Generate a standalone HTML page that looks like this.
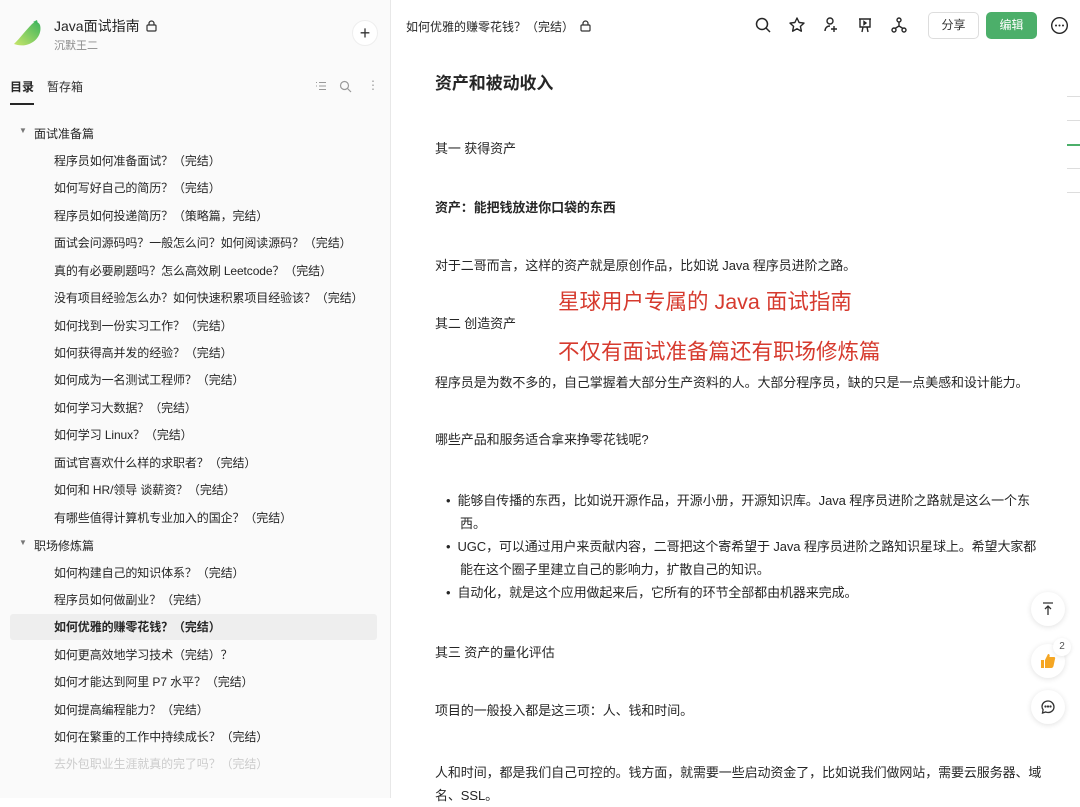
<!DOCTYPE html><html><head><meta charset="utf-8"><style>
*{margin:0;padding:0;box-sizing:border-box}
body{width:1080px;height:798px;overflow:hidden;background:#fff;font-family:"Liberation Sans","Noto Sans CJK SC",sans-serif;color:#262626;position:relative}
.sb{position:absolute;left:0;top:0;width:391px;height:798px;background:#fafafa;border-right:1px solid #e8e8e8}
.a{position:absolute;white-space:nowrap}
.it{position:absolute;left:54px;font-size:12px;color:#262626;line-height:16px;letter-spacing:-0.1px}
.c{position:absolute;left:435px;font-size:13px;color:#262626;line-height:18px;white-space:nowrap;letter-spacing:-0.1px}
.ic{position:absolute;top:16px}
.fb{position:absolute;left:1031px;width:34px;height:34px;border-radius:50%;background:#fff;box-shadow:0 1px 6px rgba(0,0,0,.12)}
.lk{display:inline-block;vertical-align:-1px;margin-left:6px}
</style></head><body>
<div class="sb">
<svg class="a" style="left:12px;top:18px" width="30" height="30" viewBox="0 0 30 30"><defs><linearGradient id="g" x1="0" y1="1" x2="1" y2="0"><stop offset="0" stop-color="#c9e66a"/><stop offset="1" stop-color="#3fb55c"/></linearGradient></defs><path d="M2 26 C8 20 14 12 20 6 C23 3 27 4 28 7 C30 14 26 24 14 27 C9 28 5 27 2 26Z" fill="url(#g)"/><path d="M21 4 L25 2 L26 6Z" fill="#3fb55c"/></svg>
<div class="a" style="left:54px;top:16px;font-size:14px;color:#262626">Java面试指南<svg class="lk" width="11" height="12" viewBox="0 0 11 12" fill="none" stroke="#333" stroke-width="1.2"><rect x="1" y="5" width="9" height="6" rx="1"/><path d="M3 5V3.5a2.5 2.5 0 015 0V5"/></svg></div>
<div class="a" style="left:54px;top:37px;font-size:11px;color:#8c8c8c">沉默王二</div>
<div class="a" style="left:352px;top:20px;width:26px;height:26px;border-radius:50%;background:#fff;border:1px solid #eee;text-align:center;line-height:24px;font-size:18px;color:#333">+</div>
<div class="a" style="left:10px;top:78px;font-size:12px;font-weight:bold">目录</div>
<div class="a" style="left:10px;top:103px;width:24px;height:2px;background:#262626"></div>
<div class="a" style="left:47px;top:78px;font-size:12px;color:#333">暂存箱</div>
<svg class="a" style="left:315px;top:81px" width="12" height="10" viewBox="0 0 12 10" stroke="#999" stroke-width="1.1"><path d="M1 1.5h1M4 1.5h7M1 5h1M4 5h7M4 8.5h7"/></svg>
<svg class="a" style="left:339px;top:80px" width="13" height="13" viewBox="0 0 13 13"><circle cx="5.5" cy="5.5" r="4" fill="none" stroke="#999" stroke-width="1.2"/><path d="M8.5 8.5L12 12" stroke="#999" stroke-width="1.2"/></svg>
<div class="a" style="left:367px;top:78px;font-size:12px;color:#999">⋮</div>
<div class="a" style="left:10px;top:614px;width:367px;height:26px;background:#eee;border-radius:3px"></div>
<div class="a" style="left:19px;top:126px;font-size:8px;color:#777">▼</div><div class="a" style="left:34px;top:125px;font-size:12px">面试准备篇</div>
<div class="it" style="top:153px">程序员如何准备面试？（完结）</div>
<div class="it" style="top:180px">如何写好自己的简历？（完结）</div>
<div class="it" style="top:208px">程序员如何投递简历？（策略篇，完结）</div>
<div class="it" style="top:235px">面试会问源码吗？一般怎么问？如何阅读源码？（完结）</div>
<div class="it" style="top:263px">真的有必要刷题吗？怎么高效刷 Leetcode？（完结）</div>
<div class="it" style="top:290px">没有项目经验怎么办？如何快速积累项目经验该？（完结）</div>
<div class="it" style="top:318px">如何找到一份实习工作？（完结）</div>
<div class="it" style="top:345px">如何获得高并发的经验？（完结）</div>
<div class="it" style="top:372px">如何成为一名测试工程师？（完结）</div>
<div class="it" style="top:400px">如何学习大数据？（完结）</div>
<div class="it" style="top:427px">如何学习 Linux？（完结）</div>
<div class="it" style="top:455px">面试官喜欢什么样的求职者？（完结）</div>
<div class="it" style="top:482px">如何和 HR/领导 谈薪资？（完结）</div>
<div class="it" style="top:510px">有哪些值得计算机专业加入的国企？（完结）</div>
<div class="a" style="left:19px;top:538px;font-size:8px;color:#777">▼</div><div class="a" style="left:34px;top:537px;font-size:12px">职场修炼篇</div>
<div class="it" style="top:565px">如何构建自己的知识体系？（完结）</div>
<div class="it" style="top:592px">程序员如何做副业？（完结）</div>
<div class="it" style="top:619px;font-weight:bold">如何优雅的赚零花钱？（完结）</div>
<div class="it" style="top:647px">如何更高效地学习技术（完结）？</div>
<div class="it" style="top:674px">如何才能达到阿里 P7 水平？（完结）</div>
<div class="it" style="top:702px">如何提高编程能力？（完结）</div>
<div class="it" style="top:729px">如何在繁重的工作中持续成长？（完结）</div>
<div class="it" style="top:756px;color:#ccc">去外包职业生涯就真的完了吗？（完结）</div>
</div>
<div class="a" style="left:406px;top:18px;font-size:12px">如何优雅的赚零花钱？（完结）<svg class="lk" width="11" height="12" viewBox="0 0 11 12" fill="none" stroke="#333" stroke-width="1.2"><rect x="1" y="5" width="9" height="6" rx="1"/><path d="M3 5V3.5a2.5 2.5 0 015 0V5"/></svg></div>
<svg class="ic" style="left:754px" width="18" height="18" viewBox="0 0 18 18" fill="none" stroke="#262626" stroke-width="1.5"><circle cx="8" cy="8" r="5.5"/><path d="M12 12l4 4"/></svg>
<svg class="ic" style="left:788px" width="18" height="18" viewBox="0 0 18 18" fill="none" stroke="#262626" stroke-width="1.4" stroke-linejoin="round"><path d="M9 2l2.1 4.5 4.9.6-3.6 3.3 1 4.8L9 12.8 4.6 15.2l1-4.8L2 7.1l4.9-.6z"/></svg>
<svg class="ic" style="left:822px" width="18" height="18" viewBox="0 0 18 18" fill="none" stroke="#262626" stroke-width="1.4"><circle cx="8" cy="5" r="3"/><path d="M3 15c0-3 2-5 5-5M12 10v6M9 13h6"/></svg>
<svg class="ic" style="left:856px" width="18" height="18" viewBox="0 0 18 18" fill="none" stroke="#262626" stroke-width="1.4"><path d="M3 3h12M4 3v8h10V3M7 11l-1 5M11 11l1 5"/><path d="M8 5.5l2 1.5-2 1.5z" fill="#262626"/></svg>
<svg class="ic" style="left:890px" width="18" height="18" viewBox="0 0 18 18" fill="none" stroke="#262626" stroke-width="1.4"><circle cx="9" cy="4" r="2"/><circle cx="4" cy="14" r="2"/><circle cx="14" cy="14" r="2"/><path d="M9 6v4M9 10l-4 2.5M9 10l4 2.5"/></svg>
<div class="a" style="left:928px;top:12px;width:51px;height:27px;border:1px solid #ddd;border-radius:5px;text-align:center;line-height:25px;font-size:12px;color:#333">分享</div>
<div class="a" style="left:986px;top:12px;width:51px;height:27px;background:#4caf6a;border-radius:5px;text-align:center;line-height:27px;font-size:12px;color:#fff">编辑</div>
<svg class="ic" style="left:1050px;top:16px" width="19" height="19" viewBox="0 0 19 19"><circle cx="9.5" cy="9.5" r="7.8" fill="none" stroke="#262626" stroke-width="1.4"/><circle cx="6" cy="9.5" r="1" fill="#262626"/><circle cx="9.5" cy="9.5" r="1" fill="#262626"/><circle cx="13" cy="9.5" r="1" fill="#262626"/></svg>
<div class="a" style="left:1067px;top:96px;width:13px;height:1px;background:#ddd"></div>
<div class="a" style="left:1067px;top:120px;width:13px;height:1px;background:#ddd"></div>
<div class="a" style="left:1067px;top:144px;width:13px;height:2px;background:#4caf6a"></div>
<div class="a" style="left:1067px;top:168px;width:13px;height:1px;background:#ddd"></div>
<div class="a" style="left:1067px;top:192px;width:13px;height:1px;background:#ddd"></div>
<div class="c" style="top:73px;font-size:17px;font-weight:bold;line-height:22px">资产和被动收入</div>
<div class="c" style="top:140px">其一 获得资产</div>
<div class="c" style="top:199px;font-weight:bold">资产：能把钱放进你口袋的东西</div>
<div class="c" style="top:257px">对于二哥而言，这样的资产就是原创作品，比如说 Java 程序员进阶之路。</div>
<div class="c" style="top:315px">其二 创造资产</div>
<div class="a" style="left:558px;top:288px;font-size:21.5px;color:#d63a2e;line-height:28px">星球用户专属的 Java 面试指南</div>
<div class="a" style="left:558px;top:338px;font-size:21.5px;color:#d63a2e;line-height:28px">不仅有面试准备篇还有职场修炼篇</div>
<div class="c" style="top:374px">程序员是为数不多的，自己掌握着大部分生产资料的人。大部分程序员，缺的只是一点美感和设计能力。</div>
<div class="c" style="top:431px">哪些产品和服务适合拿来挣零花钱呢?</div>
<div class="c" style="left:446px;top:489px;line-height:23px">•&nbsp;&nbsp;能够自传播的东西，比如说开源作品，开源小册，开源知识库。Java 程序员进阶之路就是这么一个东<br>&nbsp;&nbsp;&nbsp;&nbsp;西。<br>•&nbsp;&nbsp;UGC，可以通过用户来贡献内容，二哥把这个寄希望于 Java 程序员进阶之路知识星球上。希望大家都<br>&nbsp;&nbsp;&nbsp;&nbsp;能在这个圈子里建立自己的影响力，扩散自己的知识。<br>•&nbsp;&nbsp;自动化，就是这个应用做起来后，它所有的环节全部都由机器来完成。</div>
<div class="c" style="top:644px">其三 资产的量化评估</div>
<div class="c" style="top:702px">项目的一般投入都是这三项：人、钱和时间。</div>
<div class="c" style="top:761px;line-height:23px">人和时间，都是我们自己可控的。钱方面，就需要一些启动资金了，比如说我们做网站，需要云服务器、域<br>名、SSL。</div>
<div class="fb" style="top:592px"><svg width="34" height="34" viewBox="0 0 34 34" stroke="#333" stroke-width="1.3" fill="none"><path d="M12 11h10M17 23v-9M14 17l3-3 3 3"/></svg></div>
<div class="fb" style="top:644px"><svg width="34" height="34" viewBox="0 0 34 34"><path d="M10 16h3v8h-3zM14 16l3-6c1.5 0 2 1 1.5 3h4.5c1 0 1.5 1 1 2l-1.5 7c-.2.8-.8 2-2 2H14z" fill="#f5a623"/></svg></div>
<div class="a" style="left:1053px;top:638px;width:18px;height:18px;border-radius:50%;background:#fff;box-shadow:0 1px 4px rgba(0,0,0,.1);font-size:10px;text-align:center;line-height:18px;color:#555">2</div>
<div class="fb" style="top:690px"><svg width="34" height="34" viewBox="0 0 34 34" fill="none" stroke="#333" stroke-width="1.3"><path d="M17 11c-3.5 0-6 2.5-6 5.5 0 1.2.4 2.3 1.1 3.2L11.5 23l3.2-1c.7.3 1.5.5 2.3.5 3.5 0 6-2.5 6-5.5S20.5 11 17 11z"/><circle cx="14.5" cy="16.5" r=".5" fill="#333"/><circle cx="17" cy="16.5" r=".5" fill="#333"/><circle cx="19.5" cy="16.5" r=".5" fill="#333"/></svg></div>
</body></html>
